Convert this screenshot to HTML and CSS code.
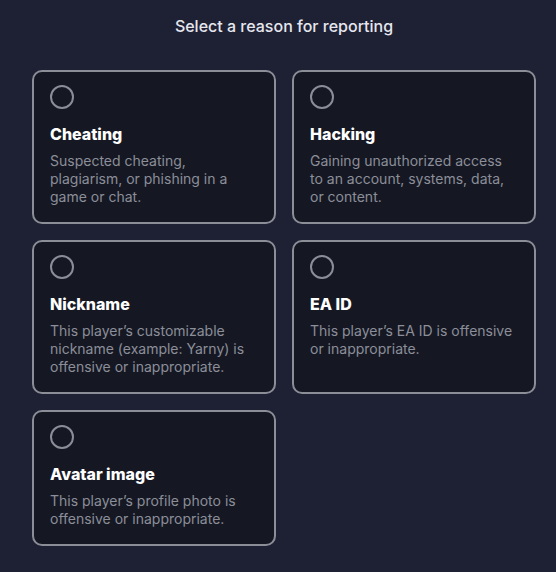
FILE: index.html
```html
<!DOCTYPE html>
<html lang="en">
<head>
<meta charset="utf-8">
<link rel="stylesheet" href="styles.css">
</head>
<body>
<main class="page">
  <h1 class="heading">Select a reason for reporting</h1>
  <div class="grid">
    <label class="card">
      <span class="radio"></span>
      <span class="title">Cheating</span>
      <span class="desc">Suspected cheating, plagiarism, or phishing in a game or chat.</span>
    </label>
    <label class="card">
      <span class="radio"></span>
      <span class="title">Hacking</span>
      <span class="desc">Gaining unauthorized access to an account, systems, data, or content.</span>
    </label>
    <label class="card">
      <span class="radio"></span>
      <span class="title">Nickname</span>
      <span class="desc">This player’s customizable nickname (example: Yarny) is offensive or inappropriate.</span>
    </label>
    <label class="card">
      <span class="radio"></span>
      <span class="title">EA ID</span>
      <span class="desc">This player’s EA ID is offensive or inappropriate.</span>
    </label>
    <label class="card">
      <span class="radio"></span>
      <span class="title">Avatar image</span>
      <span class="desc">This player’s profile photo is offensive or inappropriate.</span>
    </label>
  </div>
</main>
</body>
</html>
```
FILE: styles.css
```css
html, body {
  margin: 0;
  padding: 0;
  background: #1e2034;
  height: 100%;
}
body {
  font-family: Inter, "Noto Sans", "Liberation Sans", sans-serif;
}
.page {
  width: 504px;
  padding: 16px 0 0 32px;
}
.heading {
  margin: 0 0 34px;
  font-size: 16px;
  line-height: 20px;
  font-weight: 500;
  color: #e6e7ee;
  text-align: center;
}
.grid {
  display: grid;
  grid-template-columns: 244px 244px;
  gap: 16px;
  align-items: start;
}
.card {
  display: flex;
  flex-direction: column;
  align-items: flex-start;
  box-sizing: border-box;
  min-height: 136px;
  padding: 13px 16px 16px;
  background: #151823;
  border: 2px solid #8b8d97;
  border-radius: 10px;
}
.grid .card:nth-child(-n+4) {
  height: 154px;
}
.radio {
  width: 24px;
  height: 24px;
  box-sizing: border-box;
  border: 2px solid #8b8d97;
  border-radius: 50%;
}
.title {
  margin-top: 15px;
  font-size: 16px;
  line-height: 20px;
  font-weight: 800;
  color: #ffffff;
}
.desc {
  margin-top: 8px;
  font-size: 14px;
  line-height: 18px;
  color: #8c8e99;
}
```
